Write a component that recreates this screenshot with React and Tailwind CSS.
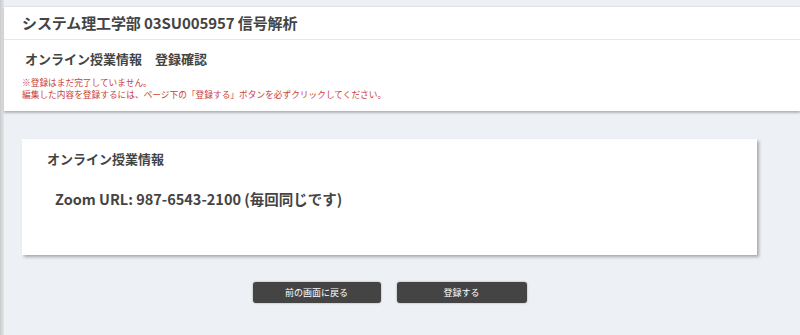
import React from "react";

const font = {
  fontFamily: '"Noto Sans CJK JP", "Noto Sans", sans-serif',
};

const App = () => {
  return (
    <div
      className="flex w-[800px] h-[335px] bg-[#edf1f5] text-[#444]"
      style={font}
    >
      {/* Left edge shadow */}
      <div className="w-[4px] shrink-0 bg-gradient-to-r from-[#c9cbcd] to-[#e3e7eb]" />

      <div className="flex-1 flex flex-col pt-[6px]">
        {/* Header */}
        <div className="bg-white border-t border-[#dde2e8] shadow-[0_2px_2px_rgba(0,0,0,0.25)]">
          <div className="h-[33px] flex items-center pl-[18px] border-b border-[#e8e8e8]">
            <h1 className="text-[15px] font-bold tracking-[-0.1px]">
              システム理工学部 03SU005957 信号解析
            </h1>
          </div>
          <div className="h-[71px] pl-[21px] pt-[10px]">
            <h2 className="text-[13px] font-bold leading-[18px]">
              オンライン授業情報　登録確認
            </h2>
            <div className="mt-[9px] text-[8.7px] leading-[12px] text-[#c9413a] -ml-[3px]">
              <p>※登録はまだ完了していません。</p>
              <p>
                編集した内容を登録するには、ページ下の「登録する」ボタンを必ずクリックしてください。
              </p>
            </div>
          </div>
        </div>

        {/* Card + buttons */}
        <div className="w-[735px] ml-[18px] mt-[28px]">
          <div className="bg-white h-[116px] shadow-[2px_2px_3px_rgba(0,0,0,0.3)] pl-[25px] pt-[11px]">
            <h3 className="text-[13px] font-bold leading-[18px]">
              オンライン授業情報
            </h3>
            <p className="mt-[21px] ml-[8px] text-[14.5px] font-semibold leading-[20px]">
              Zoom URL: 987-6543-2100 (毎回同じです)
            </p>
          </div>

          <div className="flex justify-center gap-[16px] mt-[27px]">
            <button className="w-[128px] h-[21px] rounded-[3px] bg-[#444] text-white text-[9px] shadow-[0_0_2px_rgba(0,0,0,0.4)]">
              前の画面に戻る
            </button>
            <button className="w-[130px] h-[21px] rounded-[3px] bg-[#444] text-white text-[9px] shadow-[0_0_2px_rgba(0,0,0,0.4)]">
              登録する
            </button>
          </div>
        </div>
      </div>
    </div>
  );
};

export default App;
